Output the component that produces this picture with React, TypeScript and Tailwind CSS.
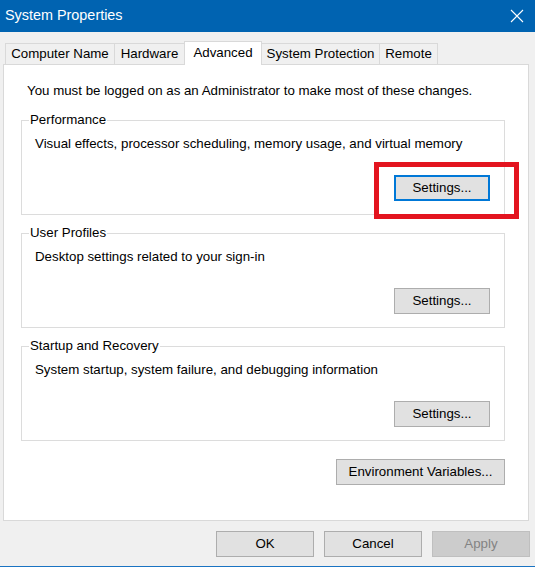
import type { ReactNode } from "react";

const tabs = [
  { label: "Computer Name", width: "w-[110px]", active: false },
  { label: "Hardware", width: "w-[71px]", active: false },
  { label: "Advanced", width: "w-[78px]", active: true },
  { label: "System Protection", width: "w-[119px]", active: false },
  { label: "Remote", width: "w-[59px]", active: false },
];

const groups = [
  {
    title: "Performance",
    text: "Visual effects, processor scheduling, memory usage, and virtual memory",
    highlighted: true,
  },
  {
    title: "User Profiles",
    text: "Desktop settings related to your sign-in",
    highlighted: false,
  },
  {
    title: "Startup and Recovery",
    text: "System startup, system failure, and debugging information",
    highlighted: false,
  },
];

const WinButton = ({
  children,
  width,
  focused,
  disabled,
}: {
  children: ReactNode;
  width: string;
  focused?: boolean;
  disabled?: boolean;
}) => {
  const base = "flex h-[26px] items-center justify-center text-[13.3px] leading-none";
  if (disabled) {
    return (
      <div className={`${base} ${width} border border-[#bfbfbf] bg-[#cccccc] text-[#838383]`}>
        {children}
      </div>
    );
  }
  if (focused) {
    return (
      <div className={`${base} ${width} border-2 border-[#0078d7] bg-[#e1e1e1] text-black`}>
        {children}
      </div>
    );
  }
  return (
    <div className={`${base} ${width} border border-[#adadad] bg-[#e1e1e1] text-black`}>
      {children}
    </div>
  );
};

export default function App() {
  return (
    <div className="flex h-[567px] w-[535px] flex-col overflow-hidden border-b border-[#1a73c2] bg-[#f0f0f0] font-['Liberation_Sans',Arial,sans-serif] text-black">
      {/* title bar */}
      <div className="flex h-[32px] shrink-0 items-center justify-between bg-[#0063b1] pr-[11px] pl-[5px]">
        <span className="text-[14.4px] text-white">System Properties</span>
        <svg width="14" height="14" viewBox="0 0 14 14">
          <path d="M1 1 L13 13 M13 1 L1 13" stroke="white" strokeWidth="1.1" fill="none" />
        </svg>
      </div>

      {/* tabs */}
      <div className="flex h-[32px] shrink-0 items-end pl-[5px]">
        {tabs.map((tab, i) =>
          tab.active ? (
            <div
              key={tab.label}
              className={`relative z-10 -mb-px flex h-[24px] items-start justify-center border border-b-0 border-[#d9d9d9] bg-white pt-[3px] text-[13.3px] leading-[16px] ${tab.width} ${i > 0 ? "-ml-px" : ""}`}
            >
              {tab.label}
            </div>
          ) : (
            <div
              key={tab.label}
              className={`flex h-[21px] items-center justify-center border border-b-0 border-[#d9d9d9] bg-[#f0f0f0] text-[13.3px] leading-[16px] ${tab.width} ${i > 0 ? "-ml-px" : ""}`}
            >
              {tab.label}
            </div>
          ),
        )}
      </div>

      {/* panel */}
      <div className="ml-[3px] h-[457px] w-[526px] shrink-0 border border-[#d9d9d9] bg-white pt-[18px] pl-[17px]">
        <p className="ml-[6px] text-[13.3px] leading-[16px]">
          You must be logged on as an Administrator to make most of these changes.
        </p>

        <div className="mt-[13px] flex flex-col gap-[10px]">
          {groups.map((g) => (
            <fieldset key={g.title} className="w-[484px] border border-[#dcdcdc] pb-[13px]">
              <legend className="ml-[7px] px-[1px] text-[13.3px] leading-[16px]">{g.title}</legend>
              <p className="mt-[8px] pl-[13px] text-[13.3px] leading-[16px]">{g.text}</p>
              <div className="mt-[23px] flex justify-end pr-[14px]">
                {g.highlighted ? (
                  <div className="relative">
                    <WinButton width="w-[96px]" focused>
                      Settings...
                    </WinButton>
                    <div className="pointer-events-none absolute top-[-13px] left-[-20px] h-[57px] w-[145px] border-[5px] border-[#e3141f]" />
                  </div>
                ) : (
                  <WinButton width="w-[96px]">Settings...</WinButton>
                )}
              </div>
            </fieldset>
          ))}
        </div>

        <div className="mt-[18px] flex w-[484px] justify-end">
          <WinButton width="w-[169px]">Environment Variables...</WinButton>
        </div>
      </div>

      {/* dialog buttons */}
      <div className="flex justify-end gap-[10px] pt-[10px] pr-[5px]">
        <WinButton width="w-[98px]">OK</WinButton>
        <WinButton width="w-[98px]">Cancel</WinButton>
        <WinButton width="w-[98px]" disabled>
          Apply
        </WinButton>
      </div>
    </div>
  );
}
